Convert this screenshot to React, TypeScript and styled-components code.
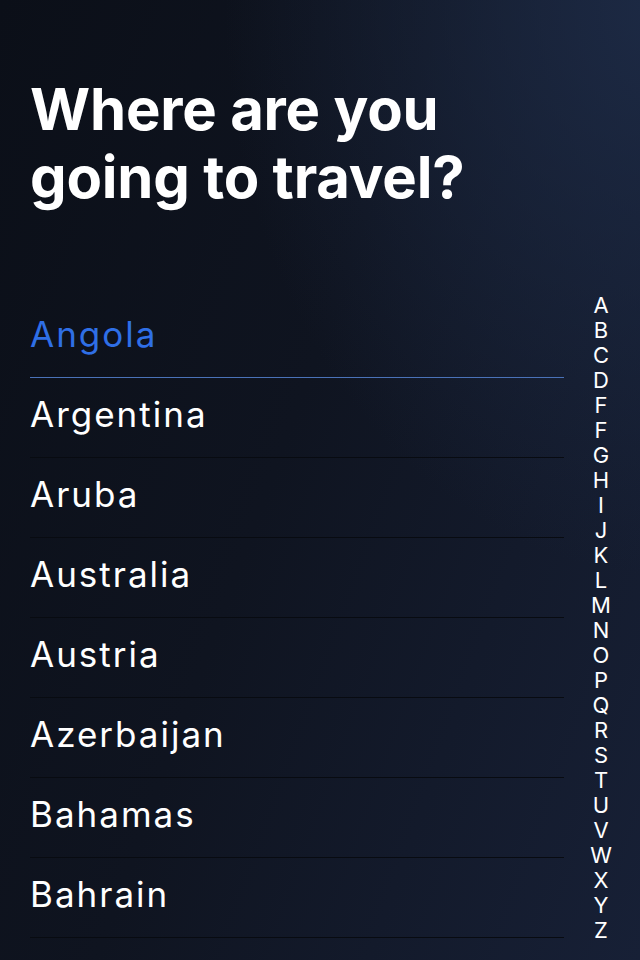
import React from "react";
import styled, { createGlobalStyle } from "styled-components";

const GlobalStyle = createGlobalStyle`
  html, body { margin: 0; padding: 0; }
  body {
    background: #0c1019;
    font-family: Inter, "Open Sans", sans-serif;
    -webkit-font-smoothing: antialiased;
  }
  #root { min-height: 960px; }
`;

const Screen = styled.div`
  width: 640px;
  height: 960px;
  overflow: hidden;
  box-sizing: border-box;
  padding: 75px 2px 0 30px;
  background:
    radial-gradient(ellipse 70% 60% at 105% 0%, rgba(30, 44, 72, 0.9) 0%, rgba(30, 44, 72, 0) 100%),
    linear-gradient(110deg, #0b0f18 0%, #0f1420 45%, #172036 100%);
  display: flex;
  flex-direction: column;
`;

const Title = styled.h1`
  margin: 0;
  color: #ffffff;
  font-family: Inter, sans-serif;
  font-weight: 700;
  font-size: 58px;
  line-height: 68px;
  letter-spacing: -0.2px;
`;

const Body = styled.div`
  display: flex;
  margin-top: 87px;
`;

const List = styled.ul`
  list-style: none;
  margin: 0;
  padding: 0;
  flex: 1;
`;

const Row = styled.li<{ $active?: boolean }>`
  height: 80px;
  box-sizing: border-box;
  display: flex;
  align-items: center;
  padding-bottom: 7px;
  border-bottom: 1px solid ${(p) => (p.$active ? "#4a72b8" : "#080b11")};
  color: ${(p) => (p.$active ? "#2f6fe6" : "#ffffff")};
  font-family: Inter, sans-serif;
  font-size: 35px;
  font-weight: 400;
  letter-spacing: 2px;
`;

const Index = styled.ol`
  list-style: none;
  margin: -5px 0 0 0;
  padding: 0;
  width: 74px;
  display: flex;
  flex-direction: column;
  align-items: center;
`;

const Letter = styled.li`
  color: #ffffff;
  font-family: Inter, sans-serif;
  font-size: 22px;
  line-height: 25px;
  font-weight: 400;
`;

const countries = [
  "Angola",
  "Argentina",
  "Aruba",
  "Australia",
  "Austria",
  "Azerbaijan",
  "Bahamas",
  "Bahrain",
];

const letters = "ABCDFFGHIJKLMNOPQRSTUVWXYZ".split("");

export default function App() {
  return (
    <>
      <GlobalStyle />
      <Screen>
        <Title>
          Where are you
          <br />
          going to travel?
        </Title>
        <Body>
          <List>
            {countries.map((c, i) => (
              <Row key={c} $active={i === 0}>
                {c}
              </Row>
            ))}
          </List>
          <Index>
            {letters.map((l, i) => (
              <Letter key={i}>{l}</Letter>
            ))}
          </Index>
        </Body>
      </Screen>
    </>
  );
}
